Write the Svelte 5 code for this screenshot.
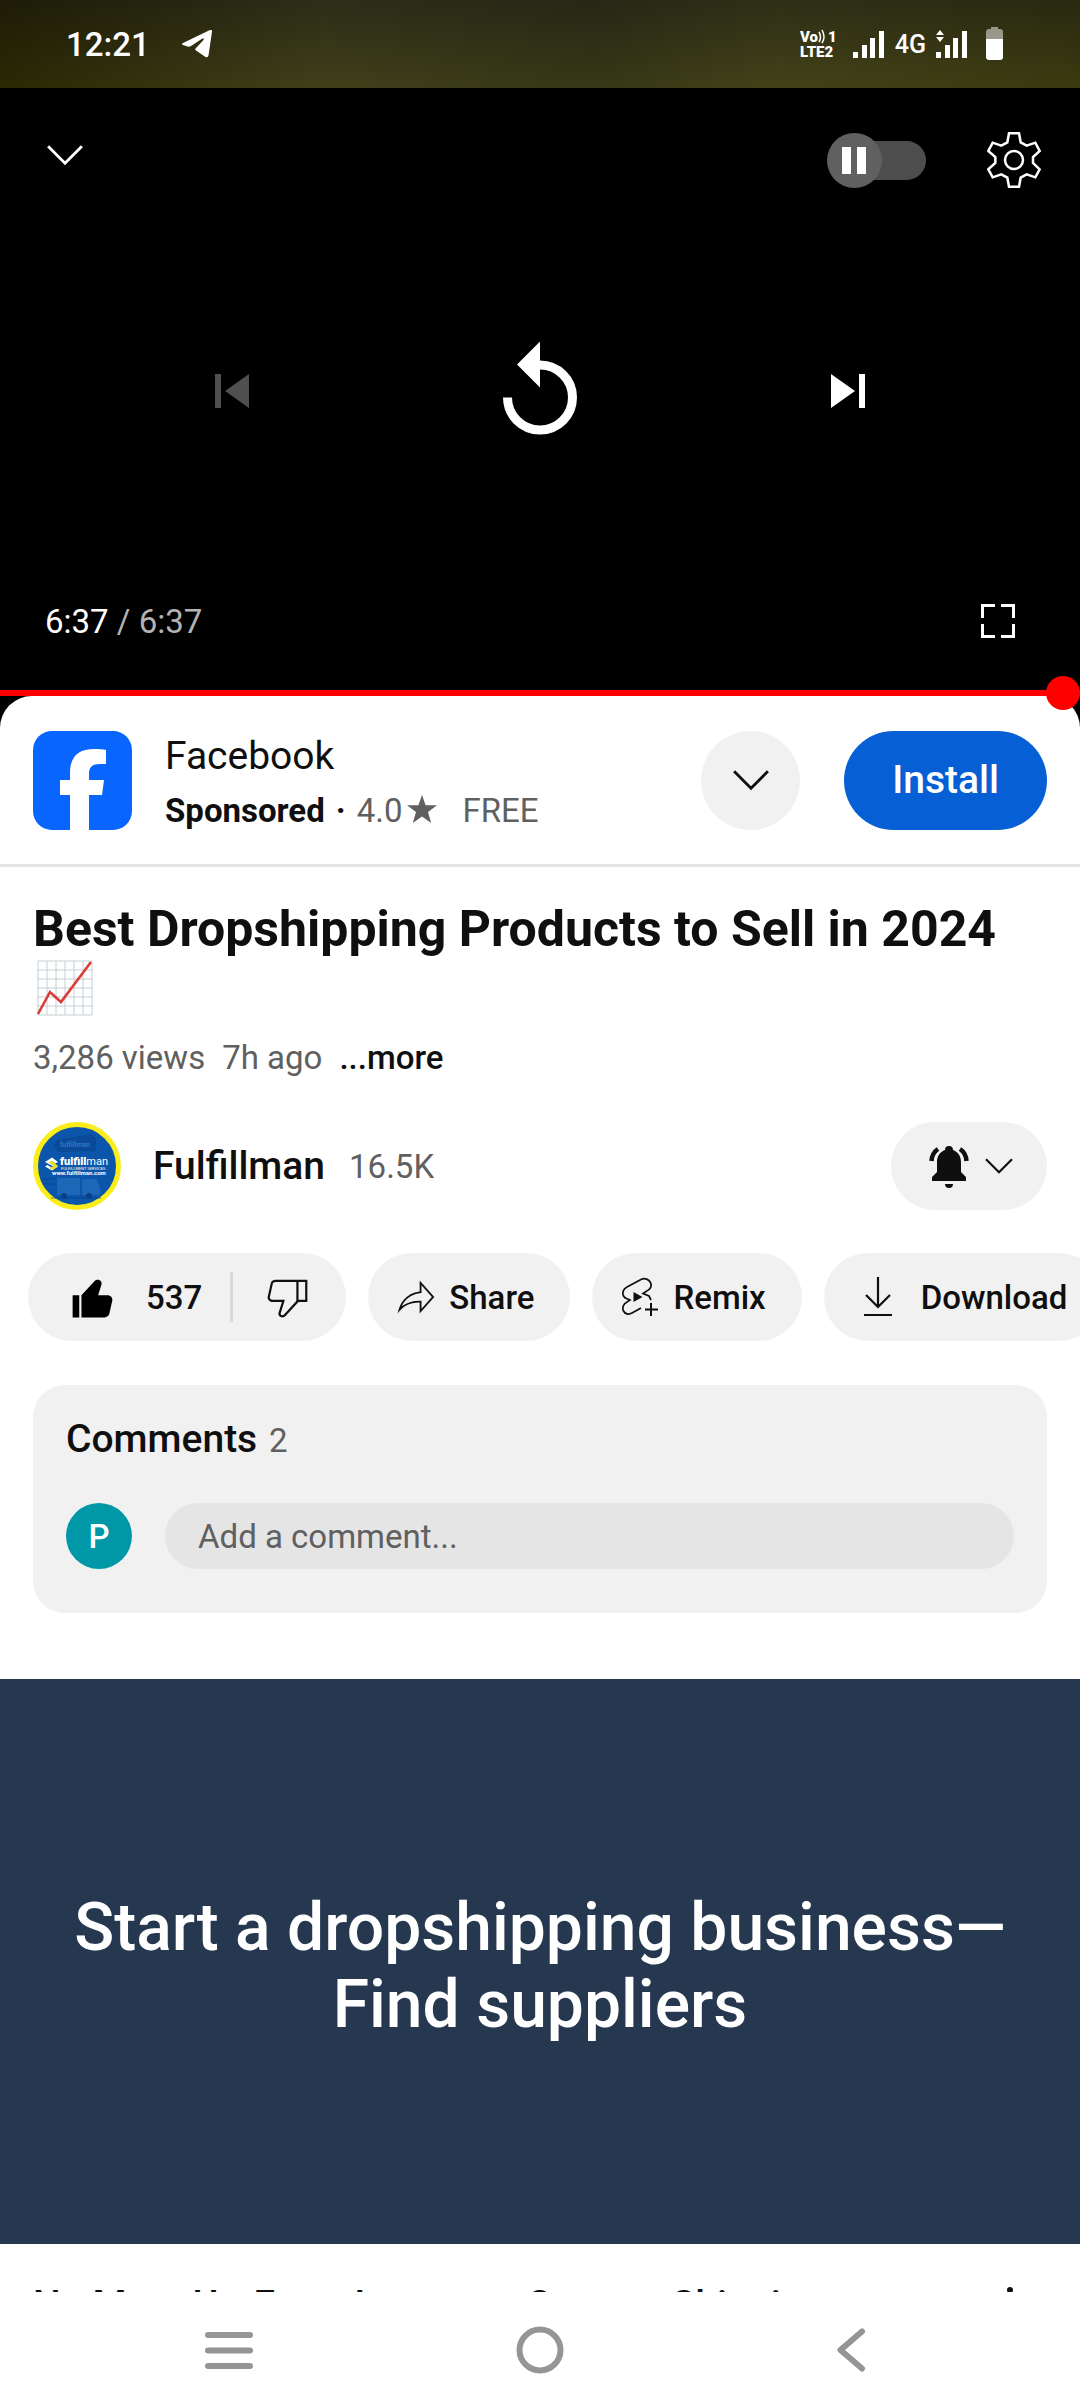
<script lang="ts">
  type Chip = { id: string; label: string };

  const chips: Chip[] = [
    { id: 'share', label: 'Share' },
    { id: 'remix', label: 'Remix' },
    { id: 'download', label: 'Download' }
  ];

  const duration = 397;

  let position = $state(duration);
  let autoplay = $state(false);
  let liked = $state(true);
  let comment = $state('');

  function formatTime(seconds: number): string {
    const rest = String(seconds % 60).padStart(2, '0');
    return `${Math.floor(seconds / 60)}:${rest}`;
  }
</script>

{#snippet chevron(size: number)}
  <svg width={size} height={size} viewBox="0 0 24 24" fill="none" stroke="currentColor" aria-hidden="true">
    <path d="M4.2 8 12 15.8 19.8 8" stroke-width="1.3" />
  </svg>
{/snippet}

{#snippet bars()}
  <svg width="32" height="28" viewBox="0 0 32 28" fill="currentColor" aria-hidden="true">
    <path d="M0 22h5v6H0zM9 15h5v13H9zM17 8h5v20h-5zM26 1h5v27h-5z" />
  </svg>
{/snippet}

<div class="screen">
  <header class="status">
    <div class="status-side">
      <time>12:21</time>
      <svg width="30" height="28" viewBox="0 0 30 28" fill="currentColor" aria-hidden="true">
        <path
          d="M1 13 28 0q2-.6 2 1.500L26.500 25.500q-.6 2.500-3 1.500L14 20.500q-1.500-1 0-2.500L21.500 10q1-2-1-1.500L9 16q-1.500 1-3.500.6L1 15q-2-1 0-2z"
        />
      </svg>
    </div>
    <div class="status-side right">
      <svg class="volte" width="37" height="32" viewBox="0 0 37 32" fill="currentColor" aria-hidden="true">
        <text x="0" y="14">Vo</text>
        <path d="M19 4q3 5 0 10M22 2q4 7 0 13" fill="none" stroke="currentColor" stroke-width="1.500" />
        <text x="28" y="14">1</text>
        <text x="0" y="29">LTE2</text>
      </svg>
      {@render bars()}
      <span class="network">4G</span>
      <span class="data">
        <svg width="8" height="12" viewBox="0 0 8 12" fill="currentColor" aria-hidden="true">
          <path d="m4 0 4 5H0zM0 7h8l-4 5z" />
        </svg>
        {@render bars()}
      </span>
      <svg class="battery" width="17" height="34" viewBox="0 0 17 34" fill="currentColor" aria-hidden="true">
        <path d="M5 0h7v2h2q3 0 3 3v7H0V5q0-3 3-3h2z" opacity=".5" />
        <path d="M0 12h17v18q0 3-3 3H3q-3 0-3-3z" />
      </svg>
    </div>
  </header>

  <section class="player" aria-label="Video player">
    <div class="player-row top">
      <button type="button" class="icon-btn collapse" aria-label="Minimise">{@render chevron(52)}</button>
      <div class="player-tools">
        <input type="checkbox" class="autoplay" aria-label="Autoplay" bind:checked={autoplay} />
        <button type="button" class="icon-btn" aria-label="Settings">
          <svg width="54" height="56" viewBox="681 396 162 168" fill="none" stroke="currentColor" stroke-width="7.500">
            <path
              d="M747 400h30l5 27 18 10 26-9 13 25-20 18v18l20 19-13 24-26-9-18 10-5 27h-30l-5-27-18-10-26 9-13-24 21-19v-18l-21-18 13-25 26 9 18-10z"
            />
            <circle cx="762" cy="480" r="27" />
          </svg>
        </button>
      </div>
    </div>

    <div class="controls">
      <button type="button" class="icon-btn" aria-label="Previous" disabled>
        <svg width="34" height="34" viewBox="0 0 34 34" fill="currentColor">
          <path d="M0 0h6v34H0zM34 0v34L10 17z" />
        </svg>
      </button>
      <button type="button" class="icon-btn" aria-label="Replay">
        <svg width="76" height="104" viewBox="0 0 76 104">
          <path d="M5.500 58.500A32.500 32.500 0 1 0 38 26" fill="none" stroke="currentColor" stroke-width="9" />
          <path d="M38 2.500v46L15 25.500z" fill="currentColor" />
        </svg>
      </button>
      <button type="button" class="icon-btn" aria-label="Next">
        <svg width="34" height="34" viewBox="0 0 34 34" fill="currentColor">
          <path d="M28 0h6v34h-6zM0 0v34l24-17z" />
        </svg>
      </button>
    </div>

    <div class="player-row bottom">
      <p class="time">{formatTime(position)} <span>/ {formatTime(duration)}</span></p>
      <button type="button" class="icon-btn" aria-label="Full screen">
        <svg width="34" height="34" viewBox="0 0 34 34" fill="none" stroke="currentColor" stroke-width="3">
          <path d="M1.500 14V1.500H14M20 1.500h12.500V14M32.500 20v12.500H20M14 32.500H1.500V20" />
        </svg>
      </button>
    </div>
    <input type="range" class="progress" aria-label="Seek" min="0" max={duration} bind:value={position} />
  </section>

  <main class="content">
    <div class="ad-wrap">
      <section class="ad" aria-label="Sponsored">
        <svg class="ad-logo" width="99" height="99" viewBox="0 0 99 99" role="img" aria-label="Facebook logo">
          <rect width="99" height="99" rx="19" fill="#0866ff" />
          <path
            d="M37 99V64H27V49h10v-7c0-16 8-24 24-24 5 0 9 0 12 1v14h-6c-8 0-11 3-11 10v6h15l-2 15H56v35z"
            fill="#fff"
          />
        </svg>
        <div class="ad-text">
          <p class="ad-name">Facebook</p>
          <p class="ad-meta">
            <strong>Sponsored</strong>
            <i>·</i>
            <span class="rating">
              4.0
              <svg width="30" height="28" viewBox="0 0 30 28" fill="currentColor" aria-label="stars">
                <path d="m15 0 3.600 10.200H30l-9 6.800L24.200 28 15 21.400 5.800 28 9 17 0 10.200h11.400z" />
              </svg>
            </span>
            <span class="price">FREE</span>
          </p>
        </div>
        <button type="button" class="round" aria-label="Show ad details">{@render chevron(52)}</button>
        <button type="button" class="install">Install</button>
      </section>
    </div>

    <section class="details">
      <h1>
        Best Dropshipping Products to Sell in 2024
        <svg width="60" height="56" viewBox="-4 0 60 56" fill="none" role="img" aria-label="Chart increasing">
          <path
            d="M1 1h54v54H1zM10 1v54M19 1v54M28 1v54M37 1v54M46 1v54M1 10h54M1 19h54M1 28h54M1 37h54M1 46h54"
            stroke="#c3ced4"
            stroke-width="1"
          />
          <path d="m1 54 12-22 11 10L54 2" stroke="#db3c36" stroke-width="2.600" />
        </svg>
      </h1>
      <p class="meta">
        <span>3,286 views</span>
        <span>7h ago</span>
        <button type="button">...more</button>
      </p>
    </section>

    <section class="channel">
      <a href="#fulfillman" class="channel-link">
        <svg class="channel-logo" width="88" height="88" viewBox="0 0 88 88" aria-hidden="true">
          <circle cx="44" cy="44" r="41.500" fill="#0b55ab" stroke="#faed19" stroke-width="5" />
          <path d="m20 23 5-5 32-6 6 4v13l-38 1z" fill="#0a3f85" opacity=".5" />
          <path d="M24 56h23v17H24zM49 57h14l4 8v8H49z" fill="#3481c4" opacity=".45" />
          <path d="M10 57h14M9 62h15M18 76h50" stroke="#0a3f85" opacity=".6" />
          <circle cx="31" cy="74" r="3" fill="#0a3f85" />
          <circle cx="56" cy="74" r="3" fill="#0a3f85" />
          <text x="27" y="25" font-size="7" font-weight="700" fill="#3f8bd0" opacity=".7">fulfillman</text>
          <path d="m12 40 7-4.500 6 4.500-2.500 1.500-3.500-2.500-2.500 1.500 8.500 4-6 4-7-4 2.500-1.500 4 2.500 2-1z" fill="#fff" />
          <path d="m15.500 40.500 3-2 6.500 5.500-5.500 4-3-2 4-2z" fill="#e8df2c" />
          <g fill="#fff">
            <text x="27" y="43" font-size="11"><tspan font-weight="900">fulfill</tspan>man</text>
            <text x="28" y="48" font-size="4">FULFILLMENT SERVICES</text>
            <text x="19" y="53" font-size="6" font-weight="700">www.fulfillman.com</text>
          </g>
        </svg>
        <span class="channel-name">Fulfillman</span>
        <span class="subs">16.5K</span>
      </a>
      <button type="button" class="bell" aria-label="Notification settings">
        <svg width="44" height="44" viewBox="0 0 44 44" fill="currentColor">
          <path d="M5 37v-4l5-5V18c0-6 3-10 8-12a4 4 0 0 1 8 0c5 2 8 6 8 12v10l5 5v4zM18 40h8a4 4 0 0 1-8 0z" />
          <path
            d="M4.500 17Q5 9 11 5M39.500 17Q39 9 33 5"
            fill="none"
            stroke="currentColor"
            stroke-width="4.500"
          />
        </svg>
        {@render chevron(40)}
      </button>
    </section>

    <div class="chips">
      <div class="chip votes">
        <button type="button" class="like" aria-pressed={liked} onclick={() => (liked = !liked)}>
          <svg width="53" height="53" viewBox="0 0 24 24" fill="#000" aria-hidden="true">
            <path
              d="M3 11h3v10H3V11zM18.770 11h-4.230l1.520-4.940C16.380 5.030 15.540 4 14.380 4c-.58 0-1.140.24-1.520.65L7 11v10h10.430c1.060 0 1.980-.67 2.190-1.610l1.340-6C21.230 12.150 20.180 11 18.770 11z"
            />
          </svg>
          537
        </button>
        <button type="button" class="dislike" aria-label="Dislike">
          <svg width="53" height="53" viewBox="0 0 24 24" fill="currentColor">
            <path
              d="M17,4h-1H6.570C5.500,4,4.590,4.670,4.380,5.610l-1.340,6C2.770,12.850,3.820,14,5.230,14h4.230l-1.520,4.940C7.620,19.970,8.460,21,9.620,21c0.580,0,1.140-0.240,1.520-0.650L17,14h4V4H17z M10.400,19.670C10.210,19.880,9.920,20,9.620,20c-0.260,0-0.500-0.110-0.630-0.300c-0.070-0.100-0.150-0.260-0.090-0.470l1.520-4.940l0.400-1.290H9.460H5.230c-0.410,0-0.800-0.170-1.030-0.460c-0.120-0.150-0.250-0.400-0.180-0.720l1.340-6C5.460,5.350,5.970,5,6.570,5H16v8.610L10.400,19.670z M20,13h-3V5h3V13z"
            />
          </svg>
        </button>
      </div>
      {#each chips as chip (chip.id)}
        <button type="button" class="chip {chip.id}">
          {#if chip.id === 'share'}
            <svg width="44" height="44" viewBox="0 0 24 24" fill="currentColor" aria-hidden="true">
              <path
                d="M15,5.630L20.660,12L15,18.370V15v-1h-1c-3.960,0-7.140,1-9.750,3.090c1.840-4.070,5.110-6.400,9.890-7.100L15,9.860V9V5.630M14,3v6C6.220,10.130,3.110,15.330,2,21c2.780-3.970,6.440-6,12-6v6l8-9L14,3z"
              />
            </svg>
          {:else if chip.id === 'remix'}
            <svg width="44" height="44" viewBox="0 0 44 44" fill="none" stroke="currentColor" stroke-width="1.700" aria-hidden="true">
              <path
                d="M33 25l-2-4-6-2.500 3-2c5-2 6-6 4.500-9S27 2.500 23 4.500L9 12c-4 2-5 6-3.500 9s4 2.500 6.500 4l-3 2c-4 2-5 6-3.500 9s5 4 8.500 2l9-5"
              />
              <path d="M33 28v13M27 34.500h13" stroke-width="2" />
              <path d="m15.500 17 9 5-9 5z" fill="currentColor" stroke="none" />
            </svg>
          {:else}
            <svg width="44" height="44" viewBox="0 0 44 44" fill="none" stroke="currentColor" stroke-width="2.200" aria-hidden="true">
              <path d="M22 2v30M10 20l12 12 12-12M8 40h28" />
            </svg>
          {/if}
          {chip.label}
        </button>
      {/each}
    </div>

    <section class="comments">
      <h2>Comments <span>2</span></h2>
      <div class="comment-row">
        <span class="user" aria-hidden="true">P</span>
        <input type="text" aria-label="Add a comment" placeholder="Add a comment..." bind:value={comment} />
      </div>
    </section>

    <a href="#suppliers" class="banner">Start a dropshipping business—<br />Find suppliers</a>

    <section class="next-item">
      <p>No More Up-Front Inventory Custom Shipping</p>
      <button type="button" aria-label="More options">
        <svg width="8" height="40" viewBox="0 0 8 40" fill="currentColor">
          <circle cx="4" cy="4" r="3" />
          <circle cx="4" cy="18" r="3" />
          <circle cx="4" cy="32" r="3" />
        </svg>
      </button>
    </section>
  </main>

  <nav class="system-nav" aria-label="System">
    <button type="button" aria-label="Recent apps">
      <svg width="50" height="50" viewBox="0 0 50 50" stroke="currentColor" stroke-width="6" stroke-linecap="round">
        <path d="M4 10h42M4 25.500h42M4 41h42" />
      </svg>
    </button>
    <button type="button" aria-label="Home">
      <svg width="50" height="50" viewBox="0 0 50 50" fill="none" stroke="currentColor" stroke-width="6">
        <circle cx="25" cy="25" r="20.500" />
      </svg>
    </button>
    <button type="button" aria-label="Back">
      <svg width="50" height="50" viewBox="0 0 50 50" fill="none" stroke="currentColor" stroke-width="6" stroke-linecap="round" stroke-linejoin="round">
        <path d="M36 6.500 14.500 25 36 43.500" />
      </svg>
    </button>
  </nav>
</div>

<style>
  :global(body) {
    margin: 0;
    background: #fff;
    color: #0f0f0f;
    font-family: Roboto, 'Noto Sans', sans-serif;
    font-size: 33px;
  }

  .screen {
    --muted: #606060;
    --chip: #f1f1f1;
    height: 100vh;
    display: flex;
    flex-direction: column;
    overflow: hidden;
  }

  svg {
    display: block;
    flex: none;
  }

  p,
  h1,
  h2 {
    margin: 0;
  }

  button {
    border: 0;
    padding: 0;
    background: none;
    color: inherit;
    font: inherit;
    cursor: pointer;
  }

  a {
    color: inherit;
    text-decoration: none;
  }

  .status {
    flex: none;
    box-sizing: border-box;
    height: 88px;
    padding: 0 77px 0 66px;
    display: flex;
    align-items: center;
    justify-content: space-between;
    color: #fff;
    background:
      linear-gradient(to bottom, rgba(20, 20, 16, 0.45), rgba(60, 60, 10, 0.25)),
      linear-gradient(to right, #252200, #41411f 30%, #35361a 55%, #44441d 72%, #3a3a12);
  }

  .status-side {
    display: flex;
    align-items: center;
    gap: 32px;
    font-weight: 500;
  }

  .status-side.right {
    gap: 10px;
  }

  .volte {
    margin-right: 6px;
    font-size: 15px;
    font-weight: 900;
  }

  .network {
    font-size: 25px;
  }

  .data {
    display: flex;
  }

  .data svg:first-child {
    margin-right: -8px;
  }

  .battery {
    margin-left: 8px;
  }

  .player {
    flex: none;
    background: #000;
    color: #fff;
    display: flex;
    flex-direction: column;
  }

  .player-row {
    display: flex;
    align-items: center;
    justify-content: space-between;
    height: 64px;
  }

  .player-row.top {
    padding: 40px 34px 0 33px;
  }

  .player-row.bottom {
    padding: 0 50px 37px 45px;
  }

  .icon-btn {
    min-width: 64px;
    min-height: 64px;
    display: grid;
    place-items: center;
  }

  .icon-btn:disabled {
    color: #4f4f4f;
    cursor: default;
  }

  .collapse {
    padding-bottom: 10px;
  }

  .player-tools {
    display: flex;
    align-items: center;
    gap: 56px;
  }

  .autoplay {
    appearance: none;
    margin: 0;
    width: 99px;
    height: 39px;
    border-radius: 20px;
    background: linear-gradient(to right, transparent 28px, #4d4d4d 28px);
    display: flex;
    align-items: center;
  }

  .autoplay::before {
    content: '';
    width: 55px;
    height: 55px;
    border-radius: 50%;
    background:
      linear-gradient(#fff, #fff) 15px 14px / 9px 27px no-repeat,
      linear-gradient(#fff, #fff) 30px 14px / 9px 27px no-repeat,
      #606060;
  }

  .controls {
    height: 397px;
    padding: 0 78px;
    display: grid;
    grid-template-columns: repeat(3, 1fr);
    place-items: center;
  }

  .time span {
    color: #b3b3b3;
  }

  .progress {
    appearance: none;
    position: relative;
    z-index: 1;
    display: block;
    width: 100%;
    height: 6px;
    margin: 0;
    background: #f00;
  }

  .progress::-webkit-slider-thumb {
    appearance: none;
    width: 34px;
    height: 34px;
    border-radius: 50%;
    background: #f00;
  }

  .content {
    flex: 1;
    min-height: 0;
    overflow: hidden;
    display: flex;
    flex-direction: column;
  }

  .content > * {
    flex: none;
  }

  /* the rounded sheet corners show the player's black behind them */
  .ad-wrap {
    background: linear-gradient(#000 50%, #fff 50%);
  }

  .ad {
    border-radius: 32px 32px 0 0;
    border-bottom: 3px solid #e5e5e5;
    background: #fff;
    height: 168px;
    padding: 0 33px;
    display: flex;
    align-items: center;
  }

  .ad-text {
    flex: 1;
    margin-left: 33px;
    padding-top: 6px;
  }

  .ad-name {
    font-size: 39px;
    line-height: 56px;
  }

  .ad-meta {
    display: flex;
    font-size: 33px;
    line-height: 54px;
    color: var(--muted);
  }

  .ad-meta i {
    margin: 0 11px;
    font-style: normal;
    font-weight: 700;
    color: #0f0f0f;
  }

  .ad-meta strong {
    color: #0f0f0f;
  }

  .rating {
    display: flex;
    align-items: center;
    gap: 4px;
  }

  .rating svg {
    margin-bottom: 4px;
  }

  .price {
    margin-left: 26px;
  }

  .round {
    width: 99px;
    height: 99px;
    border-radius: 50%;
    background: var(--chip);
    display: grid;
    place-items: center;
  }

  .install {
    height: 99px;
    padding: 0 48px;
    margin-left: 44px;
    border-radius: 50px;
    background: #065fd4;
    color: #fff;
    font-size: 39px;
    font-weight: 500;
  }

  .details {
    padding: 33px 33px 0;
  }

  h1 {
    font-size: 50px;
    line-height: 58px;
    font-weight: 700;
  }

  h1 svg {
    margin-top: 2px;
  }

  .meta {
    margin-top: 20px;
    display: flex;
    gap: 17px;
    line-height: 44px;
    color: var(--muted);
  }

  .meta button {
    color: #0f0f0f;
    font-weight: 500;
  }

  .channel {
    margin-top: 42px;
    padding: 0 33px;
    height: 88px;
    display: flex;
    align-items: center;
    justify-content: space-between;
  }

  .channel-link {
    display: flex;
    align-items: center;
  }

  .channel-name {
    margin-left: 32px;
    font-size: 39px;
    font-weight: 500;
  }

  .subs {
    margin-left: 24px;
    color: var(--muted);
  }

  .bell {
    height: 88px;
    padding: 0 28px 0 36px;
    border-radius: 44px;
    background: var(--chip);
    display: flex;
    align-items: center;
    gap: 8px;
  }

  .chips {
    margin-top: 43px;
    padding-left: 28px;
    display: flex;
    gap: 22px;
    overflow: hidden;
  }

  .chip {
    flex: none;
    height: 88px;
    border-radius: 44px;
    background: var(--chip);
    display: flex;
    align-items: center;
    font-weight: 500;
  }

  .like {
    display: flex;
    align-items: center;
    gap: 27px;
    height: 50px;
    padding: 0 28px 0 38px;
    border-right: 3px solid #d9d9d9;
  }

  .dislike {
    padding: 0 32px 0 28px;
  }

  .share,
  .remix {
    gap: 11px;
    padding: 0 36px 0 26px;
  }

  .download {
    gap: 21px;
    padding: 0 36px 0 32px;
  }

  .comments {
    margin: 44px 33px 0;
    padding: 30px 33px 44px;
    border-radius: 32px;
    background: var(--chip);
  }

  h2 {
    font-size: 39px;
    line-height: 48px;
    font-weight: 500;
  }

  h2 span {
    margin-left: 2px;
    font-size: 33px;
    font-weight: 400;
    color: var(--muted);
  }

  .comment-row {
    margin-top: 38px;
    display: flex;
    gap: 33px;
  }

  .user {
    width: 66px;
    height: 66px;
    border-radius: 50%;
    background: #0097a7;
    color: #fff;
    display: grid;
    place-items: center;
    font-weight: 500;
  }

  .comment-row input {
    flex: 1;
    min-width: 0;
    box-sizing: border-box;
    height: 66px;
    border: 0;
    border-radius: 33px;
    padding: 0 33px;
    background: #e5e5e5;
    color: #0f0f0f;
    font: inherit;
  }

  .comment-row input::placeholder {
    color: var(--muted);
    opacity: 1;
  }

  .banner {
    margin-top: 66px;
    padding: 210px 0 201px;
    background: #263850;
    color: #fff;
    font-size: 66px;
    line-height: 77px;
    font-weight: 500;
    text-align: center;
  }

  .next-item {
    padding: 39px 66px 0 33px;
    display: flex;
    justify-content: space-between;
    align-items: flex-start;
    font-size: 39px;
    line-height: 44px;
    font-weight: 500;
  }

  .next-item button {
    padding-top: 3px;
  }

  .system-nav {
    flex: none;
    height: 116px;
    padding: 0 73px;
    display: grid;
    grid-template-columns: repeat(3, 1fr);
    place-items: center;
    background: #fff;
    color: #959595;
  }
</style>
